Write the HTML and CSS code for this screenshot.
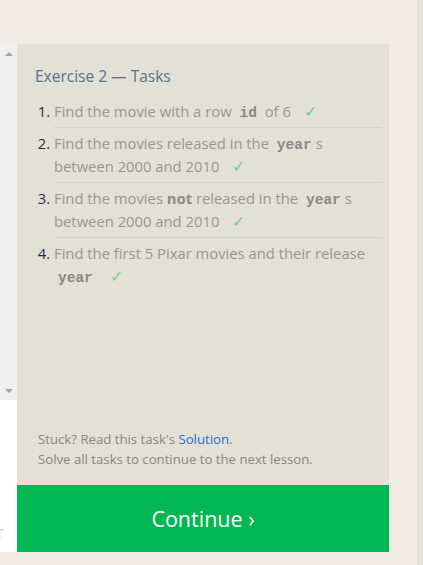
FILE: index.html
```html
<!DOCTYPE html>
<html>
<head>
<meta charset="utf-8">
<link rel="stylesheet" href="styles.css">
</head>
<body>
<div class="page">
  <div class="main">
    <div class="side">
      <div class="scroll">
        <span class="arrow up"></span>
        <span class="arrow down"></span>
      </div>
      <div class="input"><span class="ph">T</span></div>
    </div>
    <div class="lesson">
      <div class="panel">
        <h2 class="title">Exercise 2 — Tasks</h2>
        <ol class="tasks">
          <li>Find the movie with a row <code>id</code> of 6 <span class="check">✓</span></li>
          <li>Find the movies released in the <code>year</code>s between 2000 and 2010 <span class="check">✓</span></li>
          <li>Find the movies <b>not</b> released in the <code>year</code>s between 2000 and 2010 <span class="check">✓</span></li>
          <li>Find the first 5 Pixar movies and their release <code>year</code> <span class="check">✓</span></li>
        </ol>
        <div class="foot">
          <p>Stuck? Read this task's <a href="#">Solution</a>.</p>
          <p>Solve all tasks to continue to the next lesson.</p>
        </div>
      </div>
      <div class="continue">Continue ›</div>
    </div>
  </div>
  <div class="strip"></div>
</div>
</body>
</html>
```

FILE: styles.css
```css
html, body {
  margin: 0;
  padding: 0;
  height: 100%;
}
body {
  background: #f0ebe4;
  font-family: "Open Sans", "Noto Sans", sans-serif;
}
.page {
  display: flex;
  justify-content: space-between;
  height: 565px;
}
.main {
  display: flex;
  padding-top: 44px;
  align-items: flex-start;
}
.strip {
  width: 6px;
  background: #e5e1dc;
}
.side {
  width: 17px;
  display: flex;
  flex-direction: column;
}
.scroll {
  height: 356px;
  background: #f0f0f0;
  display: flex;
  flex-direction: column;
  justify-content: space-between;
  align-items: center;
  padding: 8px 0 7px;
  box-sizing: border-box;
}
.arrow {
  width: 0;
  height: 0;
  border-left: 4px solid transparent;
  border-right: 4px solid transparent;
}
.arrow.up { border-bottom: 4px solid #a3a3a3; }
.arrow.down { border-top: 4px solid #a3a3a3; }
.input {
  height: 152px;
  background: #ffffff;
  overflow: hidden;
  display: flex;
  align-items: flex-end;
}
.ph {
  color: #d0d0d0;
  font-size: 16px;
  margin-left: -5px;
  line-height: 20px;
  padding-bottom: 7px;
}
.lesson {
  width: 372px;
  display: flex;
  flex-direction: column;
}
.panel {
  height: 441px;
  background: #e3e0d6;
  display: flex;
  flex-direction: column;
  padding: 20px 7px 16px 18px;
  box-sizing: border-box;
}
.title {
  margin: 0;
  font-weight: normal;
  font-size: 15.5px;
  line-height: 24px;
  color: #5c7088;
}
.tasks {
  margin: 8px 0 0;
  padding: 0 0 0 19px;
  font-size: 14.8px;
  color: #9a968f;
}
.tasks li {
  line-height: 23px;
  padding: 4px 0;
  border-bottom: 1px solid #d5d2c8;
}
.tasks li:last-child { border-bottom: none; }
.tasks li::marker { color: #22304e; }
.tasks b { color: #8f8b85; }
.tasks code {
  font-family: "Liberation Mono", "DejaVu Sans Mono", monospace;
  font-weight: bold;
  font-size: 14.5px;
  line-height: 1;
  color: #8b8884;
  padding: 0 4px;
}
.check {
  color: #6fcf97;
  margin-left: 9px;
  font-size: 16px;
  line-height: 1;
}
.foot {
  margin-top: auto;
  padding-left: 3px;
  font-size: 13.2px;
  line-height: 19.5px;
  color: #8a8680;
}
.foot p { margin: 0; }
.foot a {
  color: #1a6fe0;
  text-decoration: none;
}
.continue {
  height: 67px;
  background: #00b853;
  color: #ffffff;
  font-size: 21.5px;
  display: flex;
  align-items: center;
  justify-content: center;
}
```
